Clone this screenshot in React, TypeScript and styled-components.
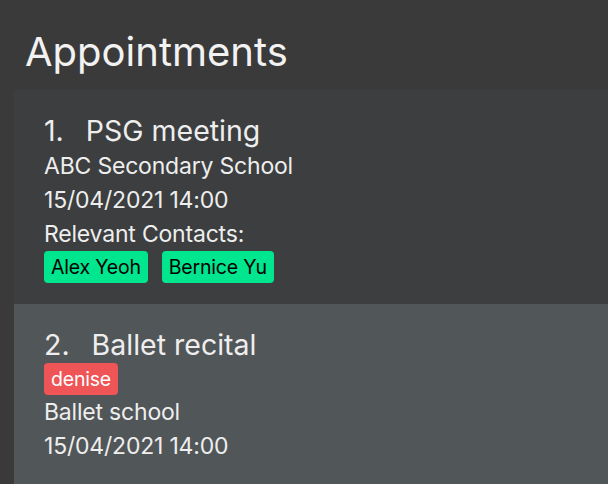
import React from 'react';
import styled, { createGlobalStyle } from 'styled-components';

interface IAppointment {
    title: string;
    tags: string[];
    place: string;
    time: string;
    contacts: string[];
}

const appointments: IAppointment[] = [
    {
        title: 'PSG meeting',
        tags: [],
        place: 'ABC Secondary School',
        time: '15/04/2021 14:00',
        contacts: ['Alex Yeoh', 'Bernice Yu'],
    },
    {
        title: 'Ballet recital',
        tags: ['denise'],
        place: 'Ballet school',
        time: '15/04/2021 14:00',
        contacts: [],
    },
];

export default function App() {
    return (
        <>
            <GlobalStyle />
            <Page>
                <Header>Appointments</Header>
                <List>
                    {appointments.map((a, i) => (
                        <Card key={a.title} odd={i % 2 === 1}>
                            <TitleRow>
                                <span>{i + 1}.</span>
                                <span>{a.title}</span>
                            </TitleRow>
                            {a.tags.length > 0 && (
                                <Tags>
                                    {a.tags.map((t) => (
                                        <Tag key={t} kind="child">
                                            {t}
                                        </Tag>
                                    ))}
                                </Tags>
                            )}
                            <Line>{a.place}</Line>
                            <Line>{a.time}</Line>
                            {a.contacts.length > 0 && (
                                <>
                                    <Line>Relevant Contacts:</Line>
                                    <Tags>
                                        {a.contacts.map((c) => (
                                            <Tag key={c} kind="contact">
                                                {c}
                                            </Tag>
                                        ))}
                                    </Tags>
                                </>
                            )}
                        </Card>
                    ))}
                </List>
            </Page>
        </>
    );
}

const GlobalStyle = createGlobalStyle`
    html, body {
        margin: 0;
        padding: 0;
        background: #3a3a3a;
        font-family: Inter, "Open Sans", sans-serif;
        overflow: hidden;
    }
`;

const Page = styled.div`
    width: 608px;
    height: 484px;
    background: #3a3a3a;
    overflow: hidden;
`;

const Header = styled.div`
    padding: 27px 0 13px 25px;
    height: 50px;
    font-size: 40px;
    line-height: 50px;
    color: #f2f2f2;
`;

const List = styled.div`
    margin-left: 14px;
    display: flex;
    flex-direction: column;
`;

const Card = styled.div<{ odd: boolean }>`
    background: ${(p) => (p.odd ? '#515658' : '#3c3e3f')};
    padding: 22px 30px 21px;
    display: flex;
    flex-direction: column;
    align-items: flex-start;
    color: #eeeeee;
`;

const TitleRow = styled.div`
    display: flex;
    gap: 22px;
    font-size: 28.5px;
    line-height: 37px;
    height: 37px;
`;

const Line = styled.div`
    font-size: 23px;
    line-height: 34px;
    letter-spacing: -0.2px;
`;

const Tags = styled.div`
    display: flex;
    gap: 14px;
`;

const Tag = styled.span<{ kind: 'contact' | 'child' }>`
    height: 32px;
    line-height: 32px;
    padding: 0 7px;
    border-radius: 4px;
    font-size: 19.5px;
    letter-spacing: -0.2px;
    background: ${(p) => (p.kind === 'contact' ? '#00e68f' : '#ef5456')};
    color: ${(p) => (p.kind === 'contact' ? '#000000' : '#ffffff')};
`;
